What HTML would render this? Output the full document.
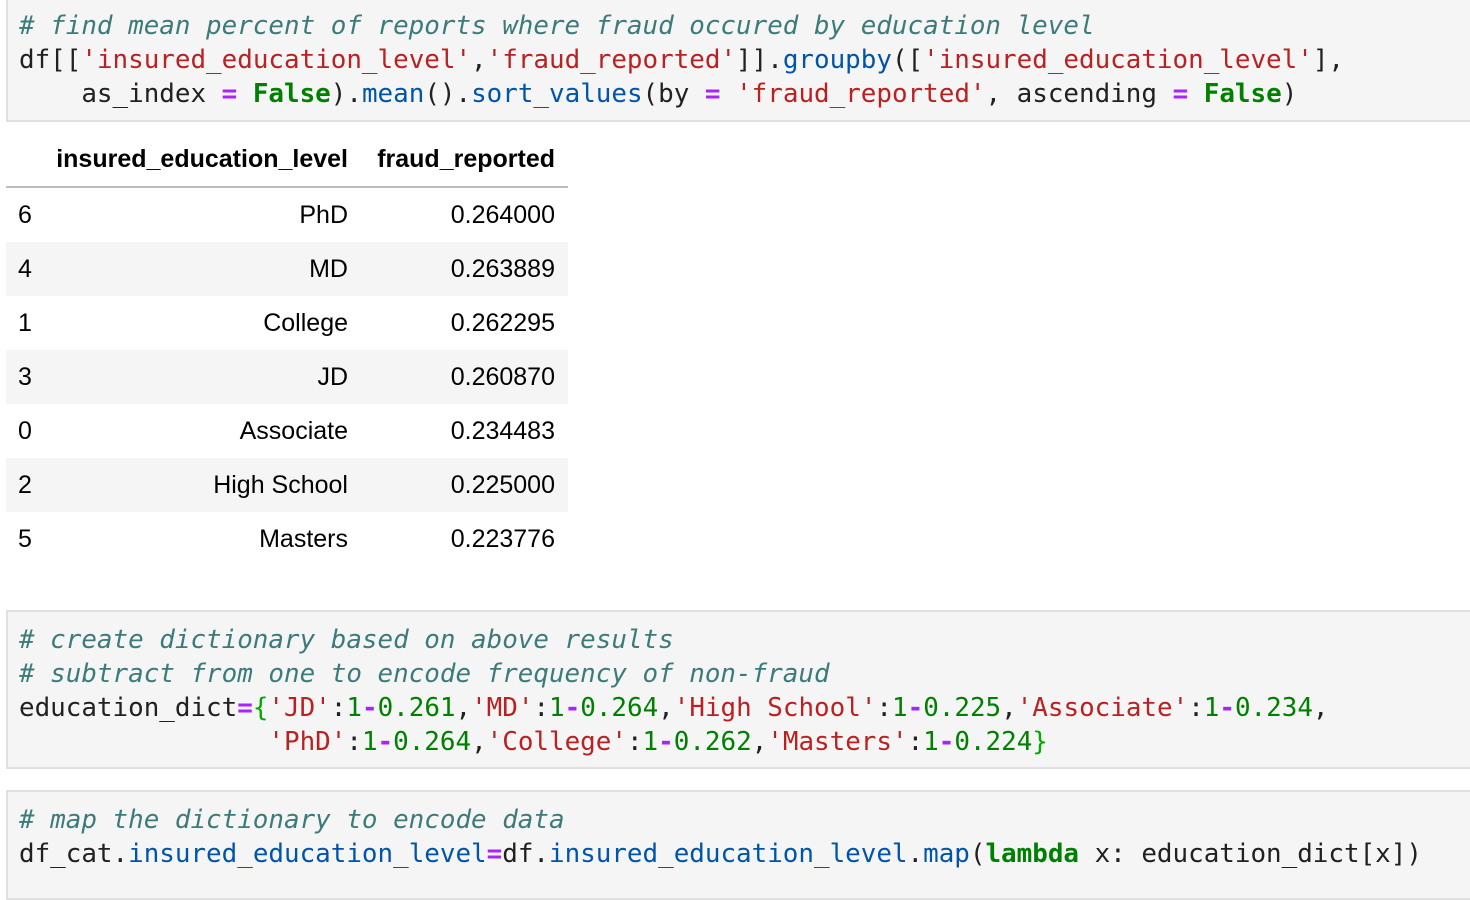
<!DOCTYPE html>
<html><head><meta charset="utf-8"><style>
body{margin:0;background:#fff;width:1470px;height:884px;overflow:hidden;position:relative;font-family:"DejaVu Sans Mono","Liberation Mono",monospace;}
.cell{position:absolute;left:6px;width:1480px;background:#f5f5f5;border:2px solid #e0e0e0;box-sizing:border-box;}
pre{margin:0;font-family:"DejaVu Sans Mono","Liberation Mono",monospace;font-size:25.9px;line-height:34px;color:#212121;padding-left:11px;white-space:pre;}
.c{color:#3d7b7b;font-style:italic}
.s{color:#ba2121}
.k{color:#008000;font-weight:bold}
.o{color:#aa22ff;font-weight:bold}
.n{color:#0055aa}
.m{color:#008000}
.b{color:#00aa00}
table{position:absolute;left:6px;top:133px;border-collapse:collapse;table-layout:fixed;font-family:"Liberation Sans",Arial,sans-serif;font-size:25px;color:#000;width:562px;}
th{font-weight:bold;height:53px;text-align:right;padding:0;border-bottom:2px solid #bdbdbd;}
td{height:54px;text-align:right;padding:0;}
td:first-child{text-align:left;padding-left:12px;}
td:last-child,th:last-child{padding-right:13px;}
tr.z td{background:#f5f5f5}
</style></head><body>
<div class="cell" style="top:-10px;height:132px;padding-top:17px">
<pre><span class="c"># find mean percent of reports where fraud occured by education level</span>
df[[<span class="s">'insured_education_level'</span>,<span class="s">'fraud_reported'</span>]].<span class="n">groupby</span>([<span class="s">'insured_education_level'</span>],
    as_index <span class="o">=</span> <span class="k">False</span>).<span class="n">mean</span>().<span class="n">sort_values</span>(by <span class="o">=</span> <span class="s">'fraud_reported'</span>, ascending <span class="o">=</span> <span class="k">False</span>)</pre>
</div>
<table>
<colgroup><col style="width:50px"><col style="width:292px"><col style="width:220px"></colgroup>
<tr><th></th><th>insured_education_level</th><th>fraud_reported</th></tr>
<tr><td>6</td><td>PhD</td><td>0.264000</td></tr>
<tr class="z"><td>4</td><td>MD</td><td>0.263889</td></tr>
<tr><td>1</td><td>College</td><td>0.262295</td></tr>
<tr class="z"><td>3</td><td>JD</td><td>0.260870</td></tr>
<tr><td>0</td><td>Associate</td><td>0.234483</td></tr>
<tr class="z"><td>2</td><td>High School</td><td>0.225000</td></tr>
<tr><td>5</td><td>Masters</td><td>0.223776</td></tr>
</table>
<div class="cell" style="top:610px;height:159px;padding-top:11px">
<pre><span class="c"># create dictionary based on above results</span>
<span class="c"># subtract from one to encode frequency of non-fraud</span>
education_dict<span class="o">=</span><span class="b">{</span><span class="s">'JD'</span>:<span class="m">1</span><span class="o">-</span><span class="m">0.261</span>,<span class="s">'MD'</span>:<span class="m">1</span><span class="o">-</span><span class="m">0.264</span>,<span class="s">'High School'</span>:<span class="m">1</span><span class="o">-</span><span class="m">0.225</span>,<span class="s">'Associate'</span>:<span class="m">1</span><span class="o">-</span><span class="m">0.234</span>,
                <span class="s">'PhD'</span>:<span class="m">1</span><span class="o">-</span><span class="m">0.264</span>,<span class="s">'College'</span>:<span class="m">1</span><span class="o">-</span><span class="m">0.262</span>,<span class="s">'Masters'</span>:<span class="m">1</span><span class="o">-</span><span class="m">0.224</span><span class="b">}</span></pre>
</div>
<div class="cell" style="top:790px;height:110px;padding-top:11px">
<pre><span class="c"># map the dictionary to encode data</span>
df_cat.<span class="n">insured_education_level</span><span class="o">=</span>df.<span class="n">insured_education_level</span>.<span class="n">map</span>(<span class="k">lambda</span> x: education_dict[x])</pre>
</div>
</body></html>
